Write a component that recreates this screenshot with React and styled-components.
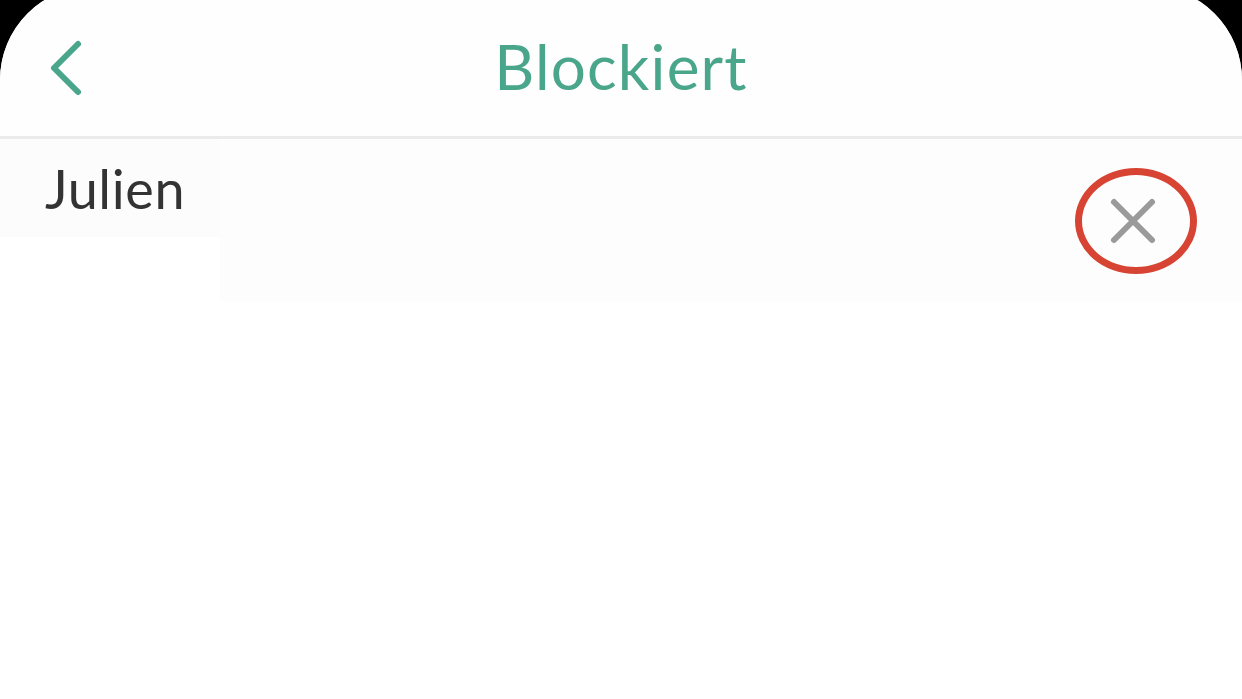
import React from 'react';
import styled, { createGlobalStyle } from 'styled-components';

const GlobalStyle = createGlobalStyle`
  html, body {
    margin: 0;
    padding: 0;
    background: #000;
    overflow: hidden;
  }
  body {
    font-family: "Lato", "Noto Sans", sans-serif;
  }
`;

const Screen = styled.div`
  width: 1242px;
  height: 713px;
  margin-top: -14px;
  background: #fff;
  border-radius: 94px 94px 0 0;
  overflow: hidden;
  display: flex;
  flex-direction: column;
`;

const Header = styled.div`
  height: 153px;
  padding-top: 14px;
  box-sizing: border-box;
  display: grid;
  grid-template-columns: 120px 1fr 120px;
  align-items: center;
  border-bottom: 3px solid #ebebeb;
  background: #fefefe;
`;

const BackButton = styled.button`
  border: none;
  background: none;
  padding: 0 0 0 46px;
  display: flex;
  align-items: center;
  height: 100%;
  cursor: pointer;
`;

const Title = styled.h1`
  margin: 0 0 4px;
  text-align: center;
  font-size: 62px;
  font-weight: 400;
  color: #4aa68a;
  letter-spacing: 1.2px;
`;

const Row = styled.div`
  display: flex;
  align-items: flex-start;
`;

const NameCell = styled.div`
  width: 220px;
  height: 98px;
  background: #fcfcfc;
  padding-left: 45px;
  box-sizing: border-box;
  display: flex;
  align-items: center;
  font-size: 54px;
  color: #333;
  letter-spacing: 0.6px;
`;

const ActionCell = styled.div`
  flex: 1;
  height: 163px;
  background: #fdfdfd;
  display: flex;
  justify-content: flex-end;
  padding-right: 45px;
  padding-top: 29px;
  box-sizing: border-box;
`;

const RemoveButton = styled.button`
  position: relative;
  width: 122px;
  height: 106px;
  border: none;
  background: none;
  padding: 0 6px 0 0;
  display: flex;
  align-items: center;
  justify-content: center;
  cursor: pointer;
`;

const Highlight = styled.span`
  position: absolute;
  inset: 0;
  border: 7px solid #d74433;
  border-radius: 50%;
`;

const Chevron = () => (
  <svg width="40" height="60" viewBox="0 0 40 60">
    <polyline
      points="32,6 8,30 32,54"
      fill="none"
      stroke="#4aa68a"
      strokeWidth="6"
      strokeLinecap="round"
      strokeLinejoin="round"
    />
  </svg>
);

const Cross = () => (
  <svg width="50" height="50" viewBox="0 0 50 50">
    <path
      d="M6 6 L44 44 M44 6 L6 44"
      stroke="#9a9a9a"
      strokeWidth="6"
      strokeLinecap="round"
    />
  </svg>
);

export default function App() {
  return (
    <>
      <GlobalStyle />
      <Screen>
        <Header>
          <BackButton aria-label="Zurück">
            <Chevron />
          </BackButton>
          <Title>Blockiert</Title>
          <div />
        </Header>
        <Row>
          <NameCell>Julien</NameCell>
          <ActionCell>
            <RemoveButton aria-label="Entblocken">
              <Highlight />
              <Cross />
            </RemoveButton>
          </ActionCell>
        </Row>
      </Screen>
    </>
  );
}
